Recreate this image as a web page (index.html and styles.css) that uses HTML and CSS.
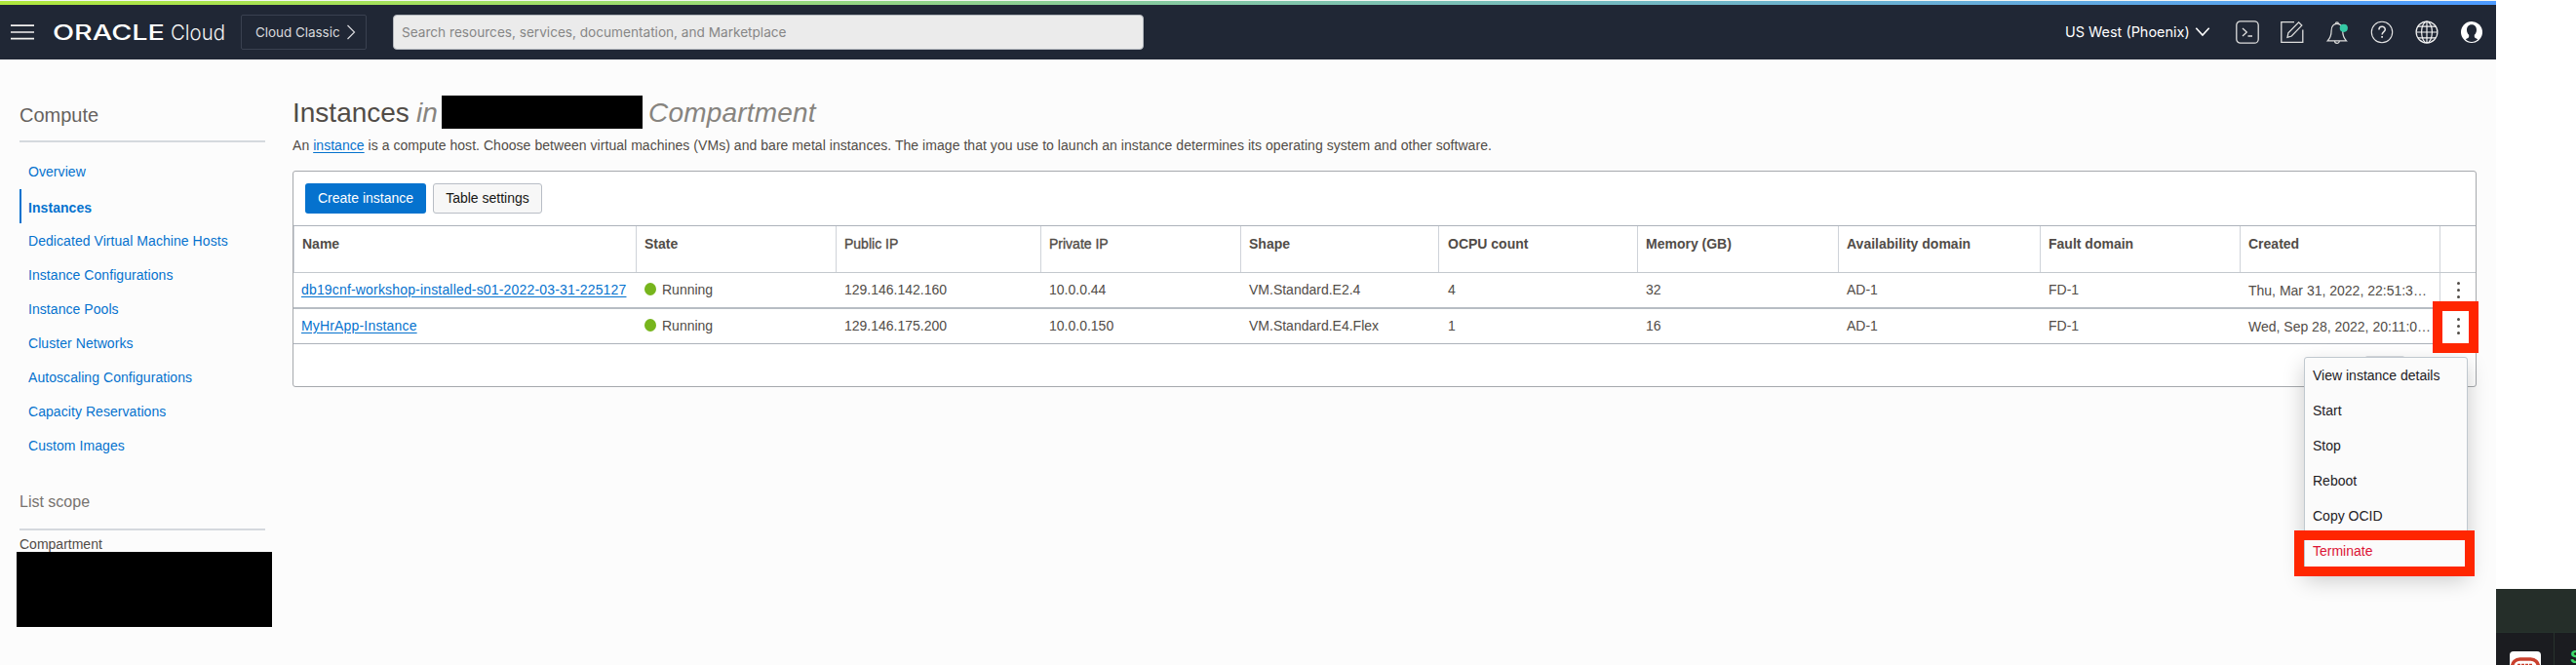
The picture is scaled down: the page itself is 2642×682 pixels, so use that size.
FILE: index.html
```html
<!DOCTYPE html>
<html lang="en">
<head>
<meta charset="utf-8">
<title>Instances | Oracle Cloud Infrastructure</title>
<link rel="stylesheet" href="styles.css">
</head>
<body>
<div class="console">
  <div class="progress"></div>
  <header class="topbar">
    <svg class="burger" width="24" height="16" viewBox="0 0 24 16"><path d="M0 1.2h24M0 8h24M0 14.6h24" stroke="#f2f1ef" stroke-width="1.7"/></svg>
    <svg class="logo" width="180" height="28" viewBox="0 0 180 28">
      <text class="logo-oracle" x="0" y="22" textLength="115" lengthAdjust="spacingAndGlyphs">ORACLE</text>
      <text class="logo-cloud" x="121" y="22" textLength="56" lengthAdjust="spacingAndGlyphs">Cloud</text>
    </svg>
    <div class="classic"><span>Cloud Classic</span><svg width="10" height="16" viewBox="0 0 10 16"><path d="M1.5 1l7 7-7 7" fill="none" stroke="#d8d9dc" stroke-width="1.2"/></svg></div>
    <div class="search"><span>Search resources, services, documentation, and Marketplace</span></div>
    <div class="region"><span>US West (Phoenix)</span><svg width="16" height="12" viewBox="0 0 16 12"><path d="M1.3 1.8L8 9l6.7-7.2" fill="none" stroke="#fff" stroke-width="1.6"/></svg></div>
    <div class="tools">
      <svg width="24" height="24" viewBox="0 0 24 24" fill="none" stroke="#dededd" stroke-width="1.3"><rect x=".8" y=".8" width="22.4" height="22.4" rx="4"/><path d="M7 8l4.3 4L7 16M12.5 16H17"/></svg>
      <svg width="24" height="24" viewBox="0 0 24 24" fill="none" stroke="#dededd" stroke-width="1.3"><path d="M14 1.7H.8v20.6h22V9.5"/><path d="M7 17.3l.9-4.6L18.6 1.9l3.2 3.2L11.3 16z"/></svg>
      <svg width="24" height="24" viewBox="0 0 24 24" fill="none" stroke="#dededd" stroke-width="1.2"><path d="M2.2 20.8h19.3c-3.2-3.2-3.8-6-3.8-10.3 0-3.9-2-7.2-5.8-7.2s-5.8 3.3-5.8 7.2c0 4.300-.7 7.100-3.9 10.300z"/><path d="M10.400 3.300a1.500 1.500 0 1 1 3 0M9.500 21a2.400 2.400 0 0 0 4.800 0"/><circle cx="18.800" cy="7.800" r="4.100" fill="#35c9a5" stroke="none"/></svg>
      <svg width="24" height="24" viewBox="0 0 24 24" fill="none" stroke="#e6e6e6" stroke-width="1.100"><circle cx="12" cy="12" r="10.700"/><path stroke-width="1.500" d="M8.900 9.400c0-4.100 6.400-4 6.400-.2 0 2.400-3.200 2.400-3.200 5.200"/><path stroke-width="1.700" d="M12.100 16v1.800"/></svg>
      <svg width="24" height="24" viewBox="0 0 24 24" fill="none" stroke="#f2f2f2" stroke-width="1.200"><circle cx="12" cy="12" r="10.900"/><ellipse cx="12" cy="12" rx="5.400" ry="10.900"/><path d="M12 1v22M1 12h22M3 6.200h18M3 17.800h18"/></svg>
      <svg width="24" height="24" viewBox="0 0 24 24"><circle cx="12" cy="12" r="11" fill="#fff"/><path d="M12 4.200c3.400 0 5.100 2.600 5 5.700-.1 2.300-1 3.700-2.200 4.800v1.800c0 1.200 1.400 1.600 3.400 2.700C16.600 20.900 14.500 22 12 22s-4.600-1.100-6.200-2.800c2-1.100 3.400-1.500 3.400-2.700v-1.800C8 13.600 7.100 12.200 7 9.900c-.1-3.100 1.600-5.700 5-5.700z" fill="#202735"/></svg>
    </div>
  </header>
  <div class="layout">
    <aside class="sidebar">
      <h2 class="side-title">Compute</h2>
      <nav class="nav">
        <a>Overview</a>
        <a class="active">Instances</a>
        <a>Dedicated Virtual Machine Hosts</a>
        <a>Instance Configurations</a>
        <a>Instance Pools</a>
        <a>Cluster Networks</a>
        <a>Autoscaling Configurations</a>
        <a>Capacity Reservations</a>
        <a>Custom Images</a>
      </nav>
      <h3 class="scope-title">List scope</h3>
      <div class="scope-label">Compartment</div>
      <div class="scope-value"></div>
    </aside>
    <main class="main">
      <h1 class="title"><span class="title-name">Instances</span><em class="title-in">in</em><span class="redacted"></span><em>Compartment</em></h1>
      <p class="desc">An <a>instance</a> is a compute host. Choose between virtual machines (VMs) and bare metal instances. The image that you use to launch an instance determines its operating system and other software.</p>
      <section class="panel">
        <div class="actions"><button class="btn primary">Create instance</button><button class="btn">Table settings</button></div>
        <div class="row head">
          <div>Name</div><div>State</div><div class="medium">Public IP</div><div class="medium">Private IP</div><div>Shape</div><div>OCPU count</div><div>Memory (GB)</div><div>Availability domain</div><div>Fault domain</div><div>Created</div><div></div>
        </div>
        <div class="row body first">
          <div><a>db19cnf-workshop-installed-s01-2022-03-31-225127</a></div><div class="state"><i></i>Running</div><div>129.146.142.160</div><div>10.0.0.44</div><div>VM.Standard.E2.4</div><div>4</div><div>32</div><div>AD-1</div><div>FD-1</div><div class="created">Thu, Mar 31, 2022, 22:51:3…</div><div class="kebab"><b></b><b></b><b></b></div>
        </div>
        <div class="row body">
          <div><a>MyHrApp-Instance</a></div><div class="state"><i></i>Running</div><div>129.146.175.200</div><div>10.0.0.150</div><div>VM.Standard.E4.Flex</div><div>1</div><div>16</div><div>AD-1</div><div>FD-1</div><div class="created">Wed, Sep 28, 2022, 20:11:0…</div><div class="kebab"><b></b><b></b><b></b></div>
        </div>
        <div class="pager"><span></span></div>
      </section>
    </main>
  </div>
  <div class="menu">
    <div>View instance details</div><div>Start</div><div>Stop</div><div>Reboot</div><div>Copy OCID</div><div class="danger">Terminate</div>
  </div>
  <div class="mark mark-kebab"></div>
  <div class="mark mark-terminate"></div>
</div>
<div class="desktop">
  <div class="other-window">
    <div class="other-bar"></div>
    <div class="other-body">
      <div class="app"><svg width="32" height="14" viewBox="0 0 32 14"><rect width="32" height="32" rx="4" fill="#fff"/><rect x="2.500" y="8" width="27" height="20" rx="8" fill="#fff" stroke="#c9402d" stroke-width="3.500"/><path d="M8 13.500h16" stroke="#c9402d" stroke-width="1.500" stroke-dasharray="3 1"/></svg></div>
      <div class="app-name">S</div>
    </div>
  </div>
</div>
</body>
</html>
```
FILE: styles.css
```css
* { box-sizing: border-box; }
body {
  margin: 0;
  width: 2642px;
  height: 682px;
  overflow: hidden;
  display: flex;
  background: #fff;
  font: 14px/20px "Liberation Sans", Arial, sans-serif;
  color: #514c47;
}
h1, h2, h3, p { margin: 0; font-weight: 400; }
a { color: #0572ce; }
svg { display: block; flex: none; }

.console { position: relative; width: 2560px; height: 682px; flex: none; background: #fcfcfc; }
.progress {
  height: 5px;
  border-top: 1px solid #f4f6f2;
  background: linear-gradient(90deg, #b0e73e 0, #9bdc75 28%, #82c6a8 50%, #66add9 79%, #4c9aff 100%);
}

.topbar { display: flex; align-items: center; height: 56px; padding: 0 13px 0 11px; background: #202735; color: #fff; font-family: Inter, sans-serif; }
.burger { margin-right: 19px; }
.logo { margin-right: 13px; }
.logo-oracle { font: 500 21px Inter, sans-serif; fill: #fff; }
.logo-cloud { font: 300 22px Inter, sans-serif; fill: #f4f4f4; }
.classic { display: flex; align-items: center; gap: 6px; width: 129px; height: 36px; padding-left: 14px; border: 1px solid #3a4150; border-radius: 2px; color: #d8d9dc; font-size: 13.500px; letter-spacing: -.05px; white-space: nowrap; }
.classic span { width: 87px; }
.search { display: flex; align-items: center; width: 770px; height: 36px; margin-left: 27px; padding: 0 0 0 8px; border: 1px solid #b4b8be; border-radius: 4px; background: #ebebeb; color: #868686; font-size: 13.620px; white-space: nowrap; }
.region { display: flex; align-items: center; gap: 5px; margin-left: auto; margin-right: 26px; font-size: 14.450px; white-space: nowrap; }
.region span { width: 128px; }
.tools { display: flex; gap: 22px; }

.layout { display: flex; }
.sidebar { width: 272px; padding: 43px 0 0 20px; }
.side-title { height: 42px; border-bottom: 2px solid #d5d9de; font-size: 20px; line-height: 28px; color: #66625e; }
.nav { display: flex; flex-direction: column; padding-top: 13px; letter-spacing: .06px; white-space: nowrap; }
.nav a { height: 35px; padding-left: 9px; line-height: 35px; }
.nav .active { margin-bottom: 1px; padding-left: 7px; border-left: 2px solid #0572ce; font-weight: 700; line-height: 38px; }
.scope-title { height: 41px; margin-top: 28px; border-bottom: 2px solid #d5d9de; font-size: 16px; line-height: 24px; color: #77736f; }
.scope-label { height: 22px; line-height: 28px; }
.scope-value { width: 262px; height: 77px; margin-left: -3px; background: #000; }

.main { width: 2240px; margin-left: 28px; padding-top: 37px; }
.title { display: flex; height: 34px; font-size: 28px; line-height: 36px; color: #514c47; }
.title em { color: #87847f; letter-spacing: .2px; }
.title-name { width: 120px; }
.title .title-in { width: 21px; margin-left: 7px; letter-spacing: 0; }
.redacted { width: 206px; height: 34px; margin: 0 6px 0 5px; background: #000; }
.desc { height: 43px; padding-top: 7px; letter-spacing: .044px; white-space: nowrap; }
.desc a, .body a { text-decoration: underline; text-underline-offset: 2px; }

.panel { height: 222px; border: 1px solid #a6a9ad; border-radius: 3px; background: #fff; }
.actions { display: flex; gap: 7px; height: 55px; padding: 12px; }
.btn { width: 112px; height: 31px; padding: 0 0 2px; border: 1px solid #b8bdc5; border-radius: 3px; background: #f7f7f7; color: #161513; font: inherit; }
.btn.primary { width: 124px; border: 0; background: #0572ce; color: #fff; }
.row { display: grid; grid-template-columns: 352px 205px 210px 205px 203px 204px 206px 207px 205px 205px 1fr; white-space: nowrap; }
.row > div { padding-left: 8px; }
.head { height: 49px; border-top: 1px solid #adb3bb; border-bottom: 1px solid #c3c8ce; font-weight: 700; }
.head > div { padding-top: 8px; border-right: 1px solid #cfd3d9; }
.head > div:first-child { border-left: 1px solid #cfd3d9; }
.head > div:last-child { border-right: 0; }
.head > div:nth-child(6), .body > div:nth-child(6) { padding-left: 9px; }
.head .medium { font-weight: 400; -webkit-text-stroke: .35px #514c47; }
.body { height: 36px; border-bottom: 1px solid #adb3bb; line-height: 34px; }
.body.first { height: 37px; border-bottom: 2px solid #b7bdc4; }
.body a { letter-spacing: .17px; }
.body > .created { padding-top: 1px; border-right: 1px solid #cfd3d9; }
.state { display: flex; gap: 6px; }
.state i { width: 12px; height: 13px; margin-top: 10px; border-radius: 50%; background: #77b51d; }
.body > .kebab { display: flex; flex-direction: column; align-items: center; gap: 4px; padding: 9px 0 0; }
.kebab b { width: 3px; height: 3px; border-radius: 50%; background: #514c47; }
.pager { display: flex; justify-content: flex-end; padding: 12px 73px 0 0; }
.pager span { width: 40px; height: 2px; border-radius: 2px 2px 0 0; background: #d9dcdf; }

.menu { position: absolute; left: 2363px; top: 366px; width: 168px; height: 221px; padding: 1px 8px; border: 1px solid #c0c8cf; border-radius: 3px; background: #fbfbfb; box-shadow: 0 8px 22px rgba(0, 0, 0, .2); color: #22201f; white-space: nowrap; }
.menu div { height: 36px; line-height: 34px; }
.menu .danger { color: #dc1436; }
.mark { position: absolute; border: 10px solid #ff2600; }
.mark-kebab { left: 2495px; top: 309px; width: 47px; height: 53px; }
.mark-terminate { left: 2353px; top: 544px; width: 185px; height: 47px; }

.desktop { display: flex; flex-direction: column; justify-content: flex-end; width: 82px; height: 682px; }
.other-window { height: 78px; background: #1b1c20; overflow: hidden; }
.other-bar { height: 45px; background: #252e29; border-bottom: 1px solid #27332d; }
.other-body { display: flex; height: 33px; }
.app { flex: none; width: 60px; padding: 19px 0 0 14px; border-right: 1px solid #27332d; }
.app-name { flex: none; padding: 12px 0 0 16px; color: #41d96b; font-size: 19px; font-weight: 700; line-height: 26px; }
```
